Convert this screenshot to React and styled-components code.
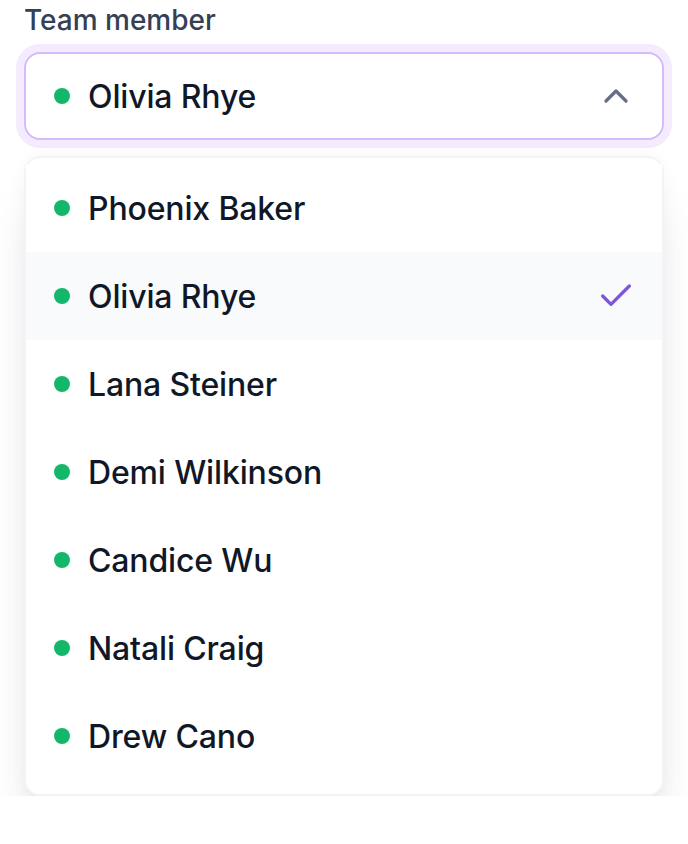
import React, { useState } from "react";
import styled, { createGlobalStyle } from "styled-components";

const GlobalStyle = createGlobalStyle`
  html, body {
    margin: 0;
    padding: 0;
    background: #fff;
  }
  body {
    font-family: "Inter", "Noto Sans", sans-serif;
    -webkit-font-smoothing: antialiased;
  }
`;

const Field = styled.div`
  display: flex;
  flex-direction: column;
  padding: 0 24px;
  width: 640px;
`;

const Label = styled.label`
  font-size: 28px;
  line-height: 40px;
  font-weight: 500;
  color: #344054;
  margin-bottom: 12px;
`;

const Trigger = styled.button`
  display: flex;
  align-items: center;
  gap: 18px;
  height: 88px;
  padding: 0 28px;
  background: #fff;
  border: 2px solid #d6bbfb;
  border-radius: 16px;
  box-shadow: 0 0 0 8px #f4ebff, 0 2px 4px rgba(16, 24, 40, 0.05);
  font-family: inherit;
  cursor: pointer;
  text-align: left;
`;

const Dot = styled.span`
  width: 16px;
  height: 16px;
  border-radius: 50%;
  background: #12b76a;
  flex-shrink: 0;
`;

const Name = styled.span`
  flex: 1;
  padding-top: 2px;
  font-size: 32px;
  line-height: 48px;
  font-weight: 500;
  letter-spacing: -0.15px;
  color: #101828;
`;

const Icon = styled.svg`
  width: 40px;
  height: 40px;
  flex-shrink: 0;
  margin-right: -2px;
`;

const Menu = styled.ul`
  list-style: none;
  margin: 16px 0 0;
  padding: 6px 0 14px;
  background: #fff;
  border: 2px solid #f2f4f7;
  border-radius: 16px;
  box-shadow: 0 40px 48px -8px rgba(16, 24, 40, 0.1),
    0 16px 16px -8px rgba(16, 24, 40, 0.04),
    0 0 20px rgba(16, 24, 40, 0.03);
`;

const Item = styled.li`
  display: flex;
  align-items: center;
  gap: 18px;
  height: 88px;
  padding: 0 28px;
  background: ${(p) => (p.$selected ? "#f9fafb" : "#fff")};
  cursor: pointer;
`;

const people = [
  "Phoenix Baker",
  "Olivia Rhye",
  "Lana Steiner",
  "Demi Wilkinson",
  "Candice Wu",
  "Natali Craig",
  "Drew Cano",
];

const App = () => {
  const [selected, setSelected] = useState("Olivia Rhye");

  return (
    <>
      <GlobalStyle />
      <Field>
        <Label>Team member</Label>
        <Trigger type="button">
          <Dot />
          <Name>{selected}</Name>
          <Icon viewBox="0 0 20 20" fill="none">
            <path
              d="M15 12.5L10 7.5L5 12.5"
              stroke="#667085"
              strokeWidth="1.67"
              strokeLinecap="round"
              strokeLinejoin="round"
            />
          </Icon>
        </Trigger>
        <Menu>
          {people.map((name) => (
            <Item
              key={name}
              $selected={name === selected}
              onClick={() => setSelected(name)}
            >
              <Dot />
              <Name>{name}</Name>
              {name === selected && (
                <Icon viewBox="0 0 20 20" fill="none">
                  <path
                    d="M16.6667 5L7.50004 14.1667L3.33337 10"
                    stroke="#7f56d9"
                    strokeWidth="1.67"
                    strokeLinecap="round"
                    strokeLinejoin="round"
                  />
                </Icon>
              )}
            </Item>
          ))}
        </Menu>
      </Field>
    </>
  );
};

export default App;
